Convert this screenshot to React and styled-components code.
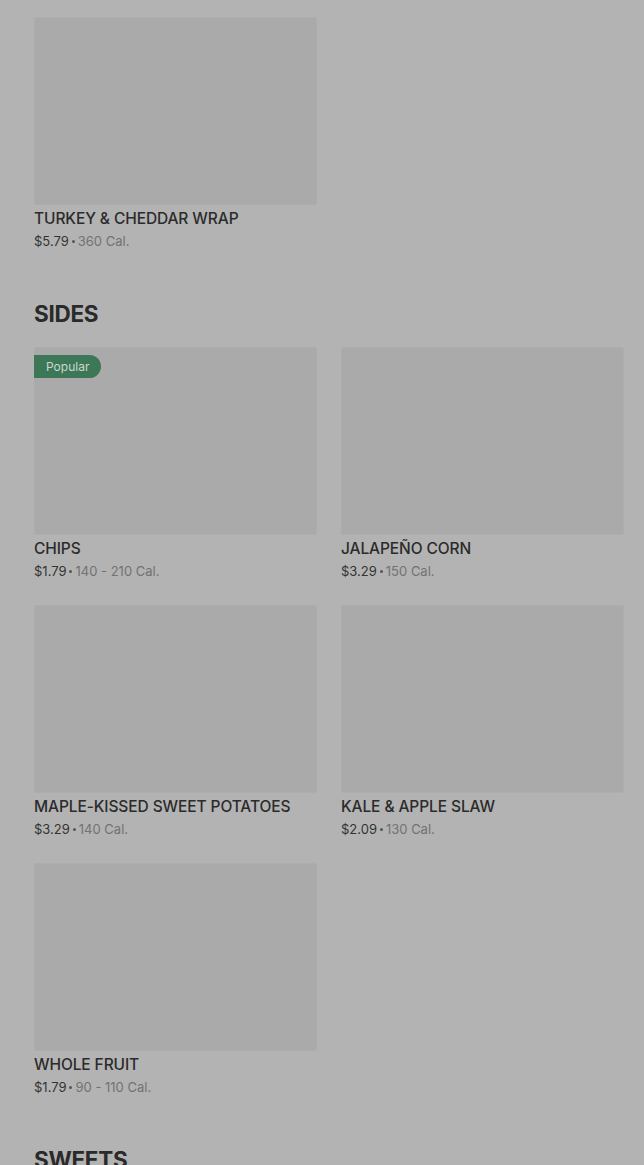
import React from 'react';
import styled, { createGlobalStyle } from 'styled-components';

const GlobalStyle = createGlobalStyle`
	html, body {
		margin: 0;
		padding: 0;
		background: #b3b3b3;
	}
	body {
		font-family: Inter, "Liberation Sans", sans-serif;
		color: #2b2b2b;
		overflow: hidden;
	}
`;

const Page = styled.div`
	height: 1165px;
	padding: 17px 20px 0 34px;
	box-sizing: border-box;
	background: #b3b3b3;
	overflow: hidden;
`;

const Section = styled.section`
	margin-bottom: 48px;
`;

const Heading = styled.h2`
	margin: 0 0 18px;
	font-size: 22.5px;
	line-height: 30px;
	font-weight: 700;
	letter-spacing: -0.3px;
	color: #2a2a2a;
`;

const Grid = styled.div`
	display: grid;
	grid-template-columns: 283px 283px;
	column-gap: 24px;
	row-gap: 24px;
`;

const Card = styled.div`
	display: flex;
	flex-direction: column;
	padding-bottom: 1px;
`;

const Thumb = styled.div`
	position: relative;
	height: 188px;
	background: #aaaaaa;
	border: 1px solid #adadad;
	box-sizing: border-box;
	border-radius: 2px;
`;

const Badge = styled.span`
	position: absolute;
	top: 7px;
	left: -1px;
	height: 23px;
	padding: 0 12px;
	display: flex;
	align-items: center;
	background: #3c7858;
	color: #c9d8cf;
	font-size: 12px;
	border-radius: 0 12px 12px 0;
`;

const Title = styled.div`
	margin-top: 4px;
	font-size: 15.5px;
	line-height: 20px;
	font-weight: 500;
	text-transform: uppercase;
	color: #2b2b2b;
	letter-spacing: -0.1px;
`;

const Meta = styled.div`
	margin-top: 3px;
	font-size: 13px;
	line-height: 18px;
	color: #727272;
	display: flex;
	align-items: center;
`;

const Price = styled.span`
	color: #333333;
`;

const Dot = styled.span`
	width: 3px;
	height: 3px;
	border-radius: 50%;
	background: #555555;
	margin: 1px 3px 0;
`;

const sections = [
	{
		items: [{ name: 'Turkey & Cheddar Wrap', price: '$5.79', cal: '360 Cal.' }],
	},
	{
		title: 'Sides',
		items: [
			{ name: 'Chips', price: '$1.79', cal: '140 - 210 Cal.', popular: true },
			{ name: 'Jalapeño Corn', price: '$3.29', cal: '150 Cal.' },
			{ name: 'Maple-Kissed Sweet Potatoes', price: '$3.29', cal: '140 Cal.' },
			{ name: 'Kale & Apple Slaw', price: '$2.09', cal: '130 Cal.' },
			{ name: 'Whole Fruit', price: '$1.79', cal: '90 - 110 Cal.' },
		],
	},
	{ title: 'Sweets', items: [] },
];

function MenuCard({ item }) {
	return (
		<Card>
			<Thumb>{item.popular && <Badge>Popular</Badge>}</Thumb>
			<Title>{item.name}</Title>
			<Meta>
				<Price>{item.price}</Price>
				<Dot />
				{item.cal}
			</Meta>
		</Card>
	);
}

export default function App() {
	return (
		<>
			<GlobalStyle />
			<Page>
				{sections.map((s, i) => (
					<Section key={i}>
						{s.title && <Heading>{s.title.toUpperCase()}</Heading>}
						<Grid>
							{s.items.map(item => (
								<MenuCard key={item.name} item={item} />
							))}
						</Grid>
					</Section>
				))}
			</Page>
		</>
	);
}
